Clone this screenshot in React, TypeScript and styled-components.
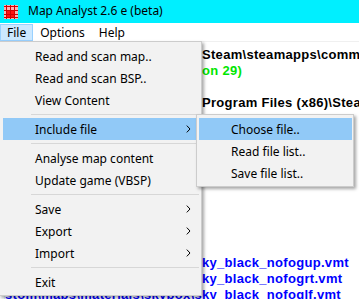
import React from "react";
import styled, { createGlobalStyle } from "styled-components";

const GlobalStyle = createGlobalStyle`
  html, body { margin: 0; padding: 0; background: #ffffff; overflow: hidden; }
  body { font-family: "Noto Sans", "Liberation Sans", sans-serif; }
  * { box-sizing: border-box; }
`;

const Window = styled.div`
  position: relative;
  width: 359px;
  height: 299px;
  overflow: hidden;
  display: flex;
  flex-direction: column;
  background: #ffffff;
`;

const TitleBar = styled.div`
  height: 23px;
  flex: none;
  background: #00efff;
  display: flex;
  align-items: center;
  gap: 10px;
  padding-left: 4px;
  font-size: 12px;
  color: #000000;
`;

const TitleText = styled.span`
  line-height: 1;
  padding-bottom: 1px;
`;

const MenuBar = styled.div`
  height: 19px;
  flex: none;
  display: flex;
  background: #ffffff;
  border-bottom: 1px solid #f0f0f0;
  font-size: 12px;
`;

const MenuBarItem = styled.div<{ $open?: boolean }>`
  display: flex;
  align-items: center;
  padding: 0 ${(p) => (p.$open ? 6 : 7)}px;
  margin-top: ${(p) => (p.$open ? 1 : 0)}px;
  height: ${(p) => (p.$open ? 17 : 18)}px;
  background: ${(p) => (p.$open ? "#cce8ff" : "transparent")};
  border: ${(p) => (p.$open ? "1px solid #99d1ff" : "none")};
  color: #000000;
`;

const Content = styled.div`
  flex: 1;
  padding: 5px 0 0 4px;
  font-family: "Liberation Sans", Arial, sans-serif;
  font-weight: bold;
  font-size: 13px;
  line-height: 16px;
  letter-spacing: 0.3px;
`;

const tones: Record<string, string> = {
  black: "#000000",
  green: "#00e600",
  blue: "#0000ff",
};

const LogLine = styled.div<{ $tone: string }>`
  display: flex;
  height: 16px;
  white-space: nowrap;
  color: ${(p) => tones[p.$tone]};
`;

const Lead = styled.div`
  width: 198px;
  flex: none;
  display: flex;
  justify-content: flex-end;
  overflow: hidden;
`;

const Rest = styled.span`
  flex: none;
`;

const Dropdown = styled.div`
  position: absolute;
  top: 41px;
  left: -1px;
  width: 203px;
  background: #f2f2f2;
  border: 1px solid #cccccc;
  padding: 3px 2px 2px 3px;
  box-shadow: 2px 2px 3px rgba(0, 0, 0, 0.35);
  display: flex;
  flex-direction: column;
  font-size: 12px;
  color: #000000;
`;

const SubMenu = styled.div`
  position: absolute;
  top: 114px;
  left: 196px;
  width: 158px;
  background: #f2f2f2;
  border: 1px solid #cccccc;
  padding: 3px 1px 2px 2px;
  box-shadow: 2px 2px 3px rgba(0, 0, 0, 0.35);
  display: flex;
  flex-direction: column;
  font-size: 12px;
  color: #000000;
`;

const MenuItem = styled.div<{ $active?: boolean }>`
  height: 22px;
  flex: none;
  display: flex;
  align-items: center;
  justify-content: space-between;
  padding: 0 8px 0 32px;
  background: ${(p) => (p.$active ? "#91c9f7" : "transparent")};
  white-space: nowrap;
`;

const Separator = styled.div`
  height: 7px;
  flex: none;
  display: flex;
  align-items: center;
  margin-left: 28px;
  &::after {
    content: "";
    flex: 1;
    height: 1px;
    background: #d7d7d7;
  }
`;

const Chevron = () => (
  <svg width="5" height="8" viewBox="0 0 5 8">
    <path d="M0.8 0.6 L4 4 L0.8 7.4" fill="none" stroke="#000" strokeWidth="1" />
  </svg>
);

const AppIcon = () => (
  <svg width="14" height="14" viewBox="0 0 14 14">
    <rect x="0" y="0" width="14" height="14" fill="#ffb0b0" />
    <rect x="3" y="5" width="7" height="7" fill="#ff1010" />
    <g stroke="#d00000" strokeWidth="1">
      <line x1="0" y1="1.5" x2="14" y2="1.5" />
      <line x1="0" y1="5.5" x2="14" y2="5.5" />
      <line x1="0" y1="9.5" x2="14" y2="9.5" />
      <line x1="0" y1="12.5" x2="14" y2="12.5" />
      <line x1="2.5" y1="0" x2="2.5" y2="14" />
      <line x1="6.5" y1="0" x2="6.5" y2="14" />
      <line x1="10.5" y1="0" x2="10.5" y2="14" />
    </g>
  </svg>
);

type Line = { lead: string; rest?: string; tone: string };

const lines: Line[] = [
  { lead: "", rest: "Steam\\steamapps\\common\\Team Fortress 2", tone: "black" },
  { lead: "", rest: "on 29)", tone: "green" },
  { lead: "", tone: "black" },
  { lead: "", rest: "Program Files (x86)\\Steam\\steamapps", tone: "black" },
  { lead: "", tone: "black" },
  { lead: "", tone: "black" },
  { lead: "", tone: "black" },
  { lead: "", tone: "black" },
  { lead: "", tone: "black" },
  { lead: "", tone: "black" },
  { lead: "", tone: "black" },
  { lead: "", tone: "black" },
  { lead: "", tone: "black" },
  { lead: "", rest: "ky_black_nofogup.vmt", tone: "blue" },
  { lead: "", rest: "ky_black_nofogrt.vmt", tone: "blue" },
  { lead: "tf\\custom\\maps\\materials\\skybox\\s", rest: "ky_black_nofoglf.vmt", tone: "blue" },
];

type Entry = { label: string; sub?: boolean; active?: boolean } | "sep";

const fileMenu: Entry[] = [
  { label: "Read and scan map.." },
  { label: "Read and scan BSP.." },
  { label: "View Content" },
  "sep",
  { label: "Include file", sub: true, active: true },
  "sep",
  { label: "Analyse map content" },
  { label: "Update game (VBSP)" },
  "sep",
  { label: "Save", sub: true },
  { label: "Export", sub: true },
  { label: "Import", sub: true },
  "sep",
  { label: "Exit" },
];

const includeMenu = ["Choose file..", "Read file list..", "Save file list.."];

export default function App() {
  return (
    <>
      <GlobalStyle />
      <Window>
        <TitleBar>
          <AppIcon />
          <TitleText>Map Analyst 2.6 e (beta)</TitleText>
        </TitleBar>
        <MenuBar>
          <MenuBarItem $open>File</MenuBarItem>
          <MenuBarItem>Options</MenuBarItem>
          <MenuBarItem>Help</MenuBarItem>
        </MenuBar>
        <Content>
          {lines.map((l, i) => (
            <LogLine key={i} $tone={l.tone}>
              <Lead>{l.lead && <span>{l.lead}</span>}</Lead>
              {l.rest && <Rest>{l.rest}</Rest>}
            </LogLine>
          ))}
        </Content>
        <Dropdown>
          {fileMenu.map((e, i) =>
            e === "sep" ? (
              <Separator key={i} />
            ) : (
              <MenuItem key={i} $active={e.active}>
                <span>{e.label}</span>
                {e.sub && <Chevron />}
              </MenuItem>
            )
          )}
        </Dropdown>
        <SubMenu>
          {includeMenu.map((label, i) => (
            <MenuItem key={label} $active={i === 0}>
              <span>{label}</span>
            </MenuItem>
          ))}
        </SubMenu>
      </Window>
    </>
  );
}
